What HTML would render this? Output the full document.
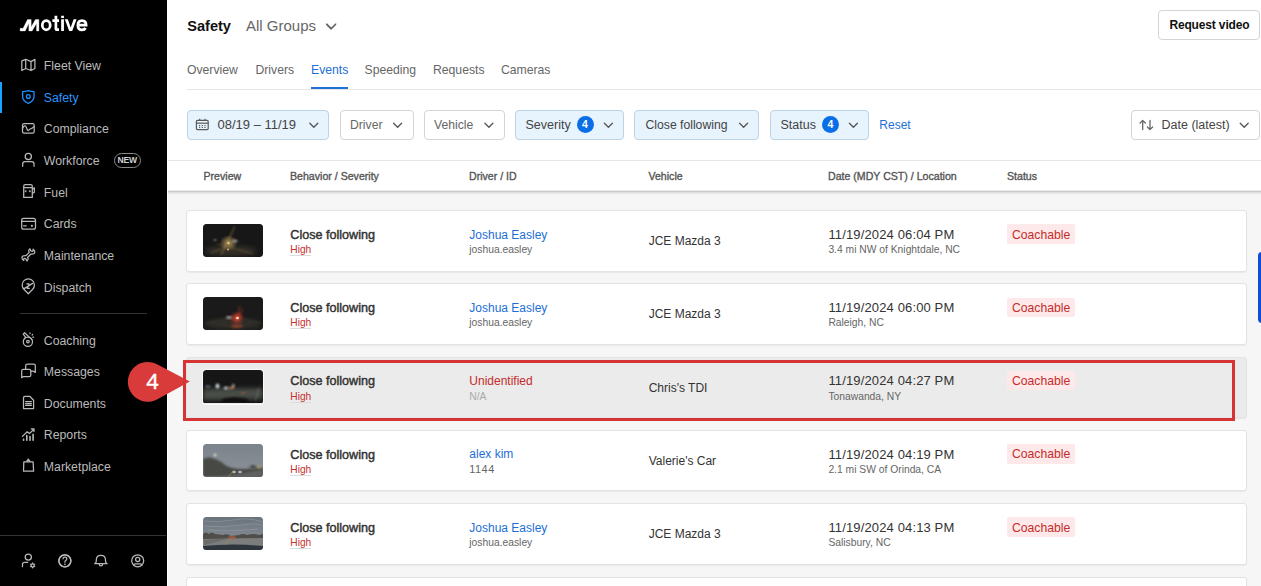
<!DOCTYPE html>
<html><head><meta charset="utf-8">
<style>
*{box-sizing:border-box;margin:0;padding:0}
html,body{width:1261px;height:586px;overflow:hidden}
body{position:relative;background:#f6f6f6;font-family:"Liberation Sans",sans-serif;color:#333}
.a{position:absolute;white-space:nowrap;line-height:1}
#side{position:absolute;left:0;top:0;width:166.6px;height:586px;background:#000}
.nav{position:absolute;left:43.8px;font-size:12.3px;color:#bababa;line-height:1;white-space:nowrap}
.ico{position:absolute;left:21px;width:16px;height:16px;overflow:visible}
.ico *{fill:none;stroke:#c8c8c8;stroke-width:1.3;stroke-linecap:round;stroke-linejoin:round}
.divl{position:absolute;left:20px;width:127px;height:1px;background:#333}
#top{position:absolute;left:166.6px;top:0;width:1094.4px;height:190px;background:#fff}
.btn{position:absolute;top:110px;height:30px;border:1px solid #d4d4d4;border-radius:4px;background:#fff}
.btn.sel{background:#e7f3fd;border-color:#bcd3e6}
.ft{position:absolute;font-size:13px;color:#444;line-height:1;white-space:nowrap}
.chev{position:absolute;width:10px;height:6px;overflow:visible}
.chev path{fill:none;stroke:#555;stroke-width:1.3;stroke-linecap:round;stroke-linejoin:round}
.badge{position:absolute;top:116px;width:17px;height:17px;border-radius:50%;background:#0a6ee6;color:#fff;font-size:10.5px;font-weight:bold;text-align:center;line-height:17px}
.th{position:absolute;top:170.9px;font-size:10.6px;font-weight:normal;-webkit-text-stroke:0.35px #555;color:#555;line-height:1;white-space:nowrap}
.card{position:absolute;left:186px;width:1061px;height:61.5px;background:#fff;border-radius:3.5px;box-shadow:inset 0 0 0 1px #e3e3e3,0 1px 1px rgba(0,0,0,.06)}
.thumb{position:absolute;left:17.2px;top:13.9px;width:60px;height:33.3px;border-radius:3.5px;overflow:hidden}.thumb svg{display:block}
.beh{position:absolute;left:104.3px;top:18.9px;font-size:12.6px;font-weight:normal;-webkit-text-stroke:0.45px #333;color:#333;line-height:1;white-space:nowrap}
.sev{position:absolute;left:104.3px;top:35.1px;font-size:10.2px;color:#c8302f;line-height:1;white-space:nowrap}
.sev:after{content:"";position:absolute;left:0;right:0;top:9.9px;border-top:1px solid #dcdcdc}
.drv{position:absolute;left:283.3px;top:18.6px;font-size:12px;color:#1d6fd6;line-height:1;white-space:nowrap}
.did{position:absolute;left:283.3px;top:35px;font-size:10.3px;color:#666;line-height:1;white-space:nowrap}
.veh{position:absolute;left:462.7px;top:25.2px;font-size:12px;color:#333;line-height:1;white-space:nowrap}
.dt{position:absolute;left:642.4px;top:17.8px;font-size:13px;letter-spacing:0.14px;color:#333;line-height:1;white-space:nowrap}
.loc{position:absolute;left:642.4px;top:35px;font-size:10.3px;color:#666;line-height:1;white-space:nowrap}
.st{position:absolute;left:821px;top:14.3px;width:68.3px;height:19.6px;background:#fde9e9;border-radius:2px}
.st span{position:absolute;left:5px;top:4.3px;font-size:12.2px;color:#c62b2b;line-height:1;white-space:nowrap}
</style></head>
<body>
<div id="side">
  <svg class="a" style="left:0;top:0" width="167" height="586" viewBox="0 0 167 586">
   <g fill="#fff" stroke="#fff" stroke-width="0.3" stroke-linejoin="round">
    <path d="M20.1 28.3 H23.1 L27.5 19.5 H31.2 V26.9 L35.4 19.5 H38.9 V31 H36.5 V23.4 L32.1 31 H28.8 V23.6 L25.2 31 H20.1 Z"/>
   </g>
   <g fill="none" stroke="#fff" stroke-width="2.75">
    <ellipse cx="46.25" cy="25.15" rx="3.95" ry="4.6"/>
    <path d="M55.9 15.7 V28.4 Q55.9 29.7 57.2 29.7 H59 M52.4 20.55 H59"/>
    <path d="M62.55 19.2 V31.1 M62.55 15.7 V18"/>
    <path d="M64.8 19.2 H67.8 L70.7 27.4 L73.6 19.2 H76.6 L72.2 31.1 H69.2 Z" fill="#fff" stroke="none"/>
    <path d="M78 25.15 H86.1 Q86.1 20.5 82 20.5 Q77.9 20.5 77.9 25.15 Q77.9 29.8 82 29.8 Q84.6 29.8 85.6 28"/>
   </g>
   <g fill="none" stroke="#b8b8b8" stroke-width="1.25" stroke-linecap="round" stroke-linejoin="round">
    <path d="M21.8 60.8 L25.7 59.3 L31 61.6 L34.9 59.4 V68.5 L31 70.5 L25.7 68.5 L21.8 70.5 Z M25.7 59.3 V68.5 M31 61.6 V70.5"/>
    <rect x="22.5" y="123.6" width="11.7" height="9.4" rx="1.6"/>
    <path d="M22.6 128.4 Q24.4 124.9 25.6 126.1 Q26.4 127 27.2 129.6 Q28 131.4 29.3 129.7 Q30 128.8 31.2 128.6 Q32.4 128.3 33.7 126.6"/>
    <circle cx="28.3" cy="156.5" r="3.1"/>
    <path d="M22.7 166.3 V163.8 Q22.7 161.6 24.9 161.6 H31.8 Q34 161.6 34 163.8 V166.3"/>
    <path d="M23.7 197.4 V186.2 Q23.7 184.7 25.2 184.7 H30.8 Q32.3 184.7 32.3 186.2 V197.4 Z M23.7 187.6 H32.3 M32.3 189.4 L34.4 187.8 V192.2 L32.3 193.6"/>
    <circle cx="25.6" cy="191.2" r="0.35" fill="#b8b8b8"/><circle cx="29.8" cy="191.2" r="0.35" fill="#b8b8b8"/>
    <rect x="21.7" y="218.4" width="13.8" height="10.8" rx="2"/>
    <path d="M21.7 221.3 H35.5 M23.6 225.8 H26.2"/>
    <circle cx="31.9" cy="225.8" r="1.1" fill="#b8b8b8" stroke="none"/>
    <path transform="translate(28.4 254.9) rotate(-45)" d="M-2.4 -1.2 H2.4 C2.6 -2.8 4 -3.4 5.4 -3.2 L4.6 -1.3 Q4.8 0.1 5.8 0.6 L7.3 -0.7 Q7.7 1.5 6.4 2.7 Q4.6 3.8 2.4 1.2 H-2.4 C-2.6 2.8 -4 3.4 -5.4 3.2 L-4.6 1.3 Q-4.8 -0.1 -5.8 -0.6 L-7.3 0.7 Q-7.7 -1.5 -6.4 -2.7 Q-4.6 -3.8 -2.4 -1.2 Z"/>
    <path d="M28.3 293.8 L23.9 289.2 A6.1 6.1 0 1 1 32.7 289.2 Z M24.2 288.6 L32.6 283.4 M26.9 283.9 H29 L27.2 288.4 H29.3"/>
    <circle cx="27.9" cy="341.8" r="4.6"/><circle cx="27.9" cy="341.6" r="1.3"/>
    <path d="M24 335.2 L23.3 334.2 L24.6 332.7 L32 339.6 M24 335.2 L25.6 337.2 L24.4 339" />
    <path d="M30 332.9 V333.6 M32.6 334.4 L32.1 335.1 M33.6 337.2 H32.8"/>
    <path d="M25.7 369.4 V365.6 Q25.7 364 27.3 364 H33.7 Q35.3 364 35.3 365.6 V372.4 L33.3 371.2 H30.8"/>
    <path d="M21.7 377.7 V371 Q21.7 369.4 23.3 369.4 H29.2 Q30.8 369.4 30.8 371 V374.9 Q30.8 376.5 29.2 376.5 H23.5 Z"/>
    <path d="M23.5 408.5 V397.8 Q23.5 396.3 25 396.3 H29.7 L33.6 400.3 V408.5 Z M25.6 401.6 H31.4 M25.6 403.5 H31.4 M25.6 405.3 H31.4"/>
    <path d="M23.6 439.4 V440.3 M26.8 435.6 V440.3 M30 436.6 V440.3 M33.1 434.4 V440.3" stroke-width="1.6"/>
    <path d="M22.4 436.4 L27.2 431.8 L29.5 433.6 L33.8 429.2 M31.2 428.9 H34 V431.4"/>
    <path d="M23.5 471.2 L23.8 461.9 H33.1 L33.6 471.2 Z M26.4 461.9 L28.3 459.1 L30.3 461.9"/>
    <circle cx="28.3" cy="557.1" r="3.1"/>
    <path d="M22.5 566.7 V564.4 Q22.5 562.3 24.6 562.3 H27.8"/>
    <path d="M64.9 554.8 A6 6 0 1 1 64.8 554.8 Z" />
    <circle cx="64.9" cy="560.8" r="6"/>
    <path d="M63 558.8 Q63 557 64.9 557 Q66.8 557 66.8 558.8 Q66.8 560 65.5 560.7 Q64.9 561.1 64.9 562.2"/>
    <circle cx="64.9" cy="564.3" r="0.3" fill="#b8b8b8"/>
    <path d="M94.7 563.7 Q96.2 562.9 96.3 561 V560 Q96.3 555.3 100.9 555.3 Q105.5 555.3 105.5 560 V561 Q105.6 562.9 107.1 563.7 Z M99.2 563.9 Q99.2 565.8 100.9 565.8 Q102.6 565.8 102.6 563.9"/>
    <circle cx="137.7" cy="560.8" r="6"/>
    <circle cx="137.7" cy="559.4" r="2.1"/>
    <path d="M133.6 565.2 Q133.6 563.8 135 563.8 H140.4 Q141.8 563.8 141.8 565.2"/>
   </g>
   <g fill="none" stroke="#1e8fff" stroke-width="1.3" stroke-linejoin="round">
    <path d="M28.3 90.6 Q25.6 91.6 22.6 91.6 V96.8 Q22.6 101 28.3 103.3 Q34 101 34 96.8 V91.6 Q31 91.6 28.3 90.6 Z"/>
    <circle cx="28.3" cy="96.5" r="1.9"/>
   </g>
   <path d="M32.60 562.10 L33.60 563.67 L35.46 563.75 L34.60 565.40 L35.46 567.05 L33.60 567.13 L32.60 568.70 L31.60 567.13 L29.74 567.05 L30.60 565.40 L29.74 563.75 L31.60 563.67 Z" fill="#b8b8b8"/>
   <circle cx="32.6" cy="565.4" r="0.9" fill="#000"/>
  </svg>
  <div class="a" style="left:0;top:82px;width:1.6px;height:31px;background:#1aa2ff"></div>

  <div class="nav" style="top:59.8px">Fleet View</div>
  <div class="nav" style="top:91.5px;color:#2a95ff">Safety</div>
  <div class="nav" style="top:123.2px">Compliance</div>
  <div class="nav" style="top:154.9px">Workforce</div>
  <div class="a" style="left:113.5px;top:153.4px;width:27.3px;height:14.2px;border:1px solid #8a8a8a;border-radius:8px;color:#d0d0d0;font-size:8.6px;font-weight:bold;line-height:12.4px;text-align:center;letter-spacing:-0.2px">NEW</div>
  <div class="nav" style="top:186.6px">Fuel</div>
  <div class="nav" style="top:218.3px">Cards</div>
  <div class="nav" style="top:250.0px">Maintenance</div>
  <div class="nav" style="top:281.5px">Dispatch</div>
  <div class="divl" style="top:313px"></div>
  <div class="nav" style="top:334.5px">Coaching</div>
  <div class="nav" style="top:366.2px">Messages</div>
  <div class="nav" style="top:397.7px">Documents</div>
  <div class="nav" style="top:429.2px">Reports</div>
  <div class="nav" style="top:460.8px">Marketplace</div>
  <div class="a" style="left:0;top:535px;width:166px;height:1px;background:#333"></div>
</div>

<div id="top">
</div>
<div class="a" style="left:166.6px;top:190px;width:1.4px;height:396px;background:#fff"></div>
<!-- header -->
<div class="a" style="left:187.2px;top:18.5px;font-size:14.6px;font-weight:bold;color:#111">Safety</div>
<div class="a" style="left:246px;top:18.2px;font-size:15px;color:#666">All Groups</div>
<svg class="chev" style="left:326px;top:23.5px" viewBox="0 0 10 6"><path d="M0.6 0.6 L5 5 L9.4 0.6" style="stroke:#666"/></svg>

<div class="a" style="left:1158px;top:10px;width:102px;height:30px;border:1px solid #d4d4d4;border-radius:4px;background:#fff"></div>
<div class="a" style="left:1169.4px;top:19.1px;font-size:12px;letter-spacing:-0.15px;font-weight:bold;color:#111">Request video</div>

<!-- tabs -->
<div class="a" style="left:187px;top:89px;width:1074px;height:1px;background:#e6e6e6"></div>
<div class="a" style="left:187px;top:64.1px;font-size:12.2px;color:#666">Overview</div>
<div class="a" style="left:255.5px;top:64.1px;font-size:12.2px;color:#666">Drivers</div>
<div class="a" style="left:311px;top:64.1px;font-size:12.2px;color:#1d6fd6">Events</div>
<div class="a" style="left:364.5px;top:64.1px;font-size:12.2px;color:#666">Speeding</div>
<div class="a" style="left:433px;top:64.1px;font-size:12.2px;color:#666">Requests</div>
<div class="a" style="left:501px;top:64.1px;font-size:12.2px;color:#666">Cameras</div>
<div class="a" style="left:311px;top:87px;width:37px;height:2px;background:#1d6fd6"></div>

<!-- filters -->
<div class="btn sel" style="left:187px;width:142px"></div>
<div class="ft" style="left:217.5px;top:118.3px">08/19 – 11/19</div>
<div class="btn" style="left:339.5px;width:74px"></div>
<div class="ft" style="left:350px;top:118.8px;color:#666;font-size:12.2px">Driver</div>
<div class="btn" style="left:423.5px;width:81px"></div>
<div class="ft" style="left:434px;top:118.8px;color:#666;font-size:12.2px">Vehicle</div>
<div class="btn sel" style="left:514.5px;width:109.5px"></div>
<div class="ft" style="left:525.5px;top:118.8px;font-size:12.5px">Severity</div>
<div class="badge" style="left:576.5px">4</div>
<div class="btn sel" style="left:634px;width:125px"></div>
<div class="ft" style="left:645.5px;top:118.8px;font-size:12.2px">Close following</div>
<div class="btn sel" style="left:769.5px;width:99.5px"></div>
<div class="ft" style="left:780.5px;top:118.8px;font-size:12.5px">Status</div>
<div class="badge" style="left:822px">4</div>
<div class="ft" style="left:879.3px;top:118.8px;color:#1d6fd6;font-size:12px">Reset</div>
<div class="btn" style="left:1130.5px;width:129px"></div>
<div class="ft" style="left:1161.5px;top:118.8px;font-size:12.5px">Date (latest)</div>
<svg class="a" style="left:0;top:0" width="1261" height="160" viewBox="0 0 1261 160">
 <g fill="none" stroke="#555" stroke-width="1.3" stroke-linecap="round" stroke-linejoin="round">
  <path d="M309.8 123.2 L313.8 127.2 L317.8 123.2"/>
  <path d="M393.6 123.2 L397.6 127.2 L401.6 123.2"/>
  <path d="M484.9 123.2 L488.9 127.2 L492.9 123.2"/>
  <path d="M604.4 123.2 L608.4 127.2 L612.4 123.2"/>
  <path d="M739.6 123.2 L743.6 127.2 L747.6 123.2"/>
  <path d="M849.4 123.2 L853.4 127.2 L857.4 123.2"/>
  <path d="M1240.2 123.2 L1244.2 127.2 L1248.2 123.2"/>
  <path d="M326.8 24 L331.3 28.5 L335.8 24" stroke="#666" stroke-width="1.2"/>
  <path d="M1142.7 129.6 V120.4 M1140.1 123 L1142.7 120.4 L1145.3 123 M1150 120.4 V129.6 M1147.4 127 L1150 129.6 L1152.6 127" stroke="#666"/>
 </g>
 <g fill="none" stroke="#5a5a5a" stroke-width="1.2">
  <rect x="196.4" y="120.4" width="11.8" height="9.2" rx="1"/>
  <path d="M196.4 123.2 H208.2" />
  <path d="M199.7 118.8 V120.4 M205 118.8 V120.4"/>
 </g>
 <g fill="#5a5a5a">
  <rect x="199" y="125" width="1.2" height="1.1"/><rect x="201.7" y="125" width="1.2" height="1.1"/><rect x="204.4" y="125" width="1.2" height="1.1"/>
  <rect x="199" y="126.9" width="1.2" height="1.1"/><rect x="201.7" y="126.9" width="1.2" height="1.1"/><rect x="204.4" y="126.9" width="1.2" height="1.1"/>
 </g>
</svg>

<!-- table header -->
<div class="a" style="left:168px;top:160px;width:1093px;height:1px;background:#e6e6e6"></div>
<div class="a" style="left:168px;top:190px;width:1093px;height:5px;background:linear-gradient(#ececec 0,#ececec 1px,#c9c9c9 1px,#c9c9c9 2px,#dedede 2px,#dedede 3px,#ebebeb 3px,#ebebeb 4px,#f2f2f2 4px)"></div>
<div class="th" style="left:203.5px">Preview</div>
<div class="th" style="left:290px">Behavior / Severity</div>
<div class="th" style="left:469px">Driver / ID</div>
<div class="th" style="left:648.5px">Vehicle</div>
<div class="th" style="left:828px">Date (MDY CST) / Location</div>
<div class="th" style="left:1007px">Status</div>

<!-- rows -->
<div class="card" style="top:210px">
  <div class="thumb" style=""><svg width="60" height="33" viewBox="0 0 60 33"><defs><filter id="b1" x="-50%" y="-50%" width="200%" height="200%"><feGaussianBlur stdDeviation="0.8"/></filter><filter id="b2" x="-50%" y="-50%" width="200%" height="200%"><feGaussianBlur stdDeviation="2.5"/></filter><radialGradient id="g1"><stop offset="0" stop-color="#d8b46a" stop-opacity=".8"/><stop offset="1" stop-color="#d8b46a" stop-opacity="0"/></radialGradient></defs>
<rect width="60" height="33" fill="#171717"/>
<ellipse cx="28" cy="27" rx="26" ry="5" fill="#4a4236" opacity=".6" filter="url(#b2)"/>
<ellipse cx="25.5" cy="19" rx="9" ry="8" fill="url(#g1)"/>
<path d="M18.3 30.5 L31.9 2.5" stroke="#b8964f" stroke-width="1" opacity=".7" filter="url(#b1)"/>
<path d="M8 29 L30 20 M14 19.7 L50 29.8" stroke="#8a7448" stroke-width=".9" opacity=".6" filter="url(#b1)"/>
<circle cx="25.5" cy="19" r="1" fill="#f0d890"/><circle cx="25" cy="25.5" r=".9" fill="#d8c070"/>
<ellipse cx="32" cy="17" rx="3" ry="1.2" fill="#c8c8d0" opacity=".7" filter="url(#b1)"/>
<ellipse cx="12" cy="16" rx="1.5" ry="1" fill="#c8c8d0" opacity=".6" filter="url(#b1)"/>
</svg></div>
  <div class="beh">Close following</div><div class="sev">High</div>
  <div class="drv">Joshua Easley</div><div class="did">joshua.easley</div>
  <div class="veh">JCE Mazda 3</div>
  <div class="dt">11/19/2024 06:04 PM</div><div class="loc">3.4 mi NW of Knightdale, NC</div>
  <div class="st"><span>Coachable</span></div>
</div>
<div class="card" style="top:283.3px">
  <div class="thumb" style=""><svg width="60" height="33" viewBox="0 0 60 33"><defs><filter id="c1" x="-50%" y="-50%" width="200%" height="200%"><feGaussianBlur stdDeviation="0.8"/></filter><filter id="c2" x="-50%" y="-50%" width="200%" height="200%"><feGaussianBlur stdDeviation="2.5"/></filter><radialGradient id="h1"><stop offset="0" stop-color="#ff6040" stop-opacity=".9"/><stop offset="1" stop-color="#e03020" stop-opacity="0"/></radialGradient></defs>
<rect width="60" height="33" fill="#1a1a1a"/>
<ellipse cx="30" cy="27" rx="28" ry="5" fill="#3e3a30" opacity=".7" filter="url(#c2)"/>
<ellipse cx="34" cy="21" rx="8" ry="7" fill="url(#h1)"/>
<path d="M34 21 L37 9 M35 21 L40 12" stroke="#d04030" stroke-width="1" opacity=".7" filter="url(#c1)"/>
<ellipse cx="26" cy="20.5" rx="3" ry="1.2" fill="#d8d8e0" opacity=".8" filter="url(#c1)"/>
<circle cx="34.5" cy="21" r="1.3" fill="#ffe0d0"/>
<ellipse cx="34" cy="29" rx="6" ry="2" fill="#d05030" opacity=".5" filter="url(#c1)"/>
<path d="M2 26 L26 22 M58 26 L40 22" stroke="#5a5240" stroke-width=".8" opacity=".6" filter="url(#c1)"/>
</svg></div>
  <div class="beh">Close following</div><div class="sev">High</div>
  <div class="drv">Joshua Easley</div><div class="did">joshua.easley</div>
  <div class="veh">JCE Mazda 3</div>
  <div class="dt">11/19/2024 06:00 PM</div><div class="loc">Raleigh, NC</div>
  <div class="st"><span>Coachable</span></div>
</div>
<div class="card" style="top:356.6px;background:#ebebeb">
  <div class="thumb" style="box-shadow:0 0 0 1px #fafafa;"><svg width="60" height="33" viewBox="0 0 60 33"><defs><filter id="d1" x="-50%" y="-50%" width="200%" height="200%"><feGaussianBlur stdDeviation="0.9"/></filter><filter id="d2" x="-50%" y="-50%" width="200%" height="200%"><feGaussianBlur stdDeviation="2"/></filter></defs>
<rect width="60" height="33" fill="#151615"/>
<path d="M0 19 L60 18 L60 29 L0 30 Z" fill="#4a4d47" filter="url(#d2)"/>
<path d="M20 29 Q30 26 44 29 L46 33 L18 33 Z" fill="#0f0f0f" filter="url(#d1)"/>
<ellipse cx="14.5" cy="16" rx="2" ry="2.5" fill="#dde4f0" opacity=".9" filter="url(#d1)"/>
<ellipse cx="5" cy="16.5" rx="3" ry="1" fill="#8890c0" opacity=".7" filter="url(#d1)"/>
<ellipse cx="23" cy="18" rx="2.5" ry="1.5" fill="#d8dcf0" opacity=".8" filter="url(#d1)"/>
<ellipse cx="28" cy="18" rx="2.5" ry="1.3" fill="#e08060" opacity=".8" filter="url(#d1)"/>
<rect x="29" y="14" width="2.5" height="4" fill="#d8c8c8" opacity=".7" filter="url(#d1)"/>
<ellipse cx="40" cy="23" rx="1.5" ry="1" fill="#e06040" opacity=".7" filter="url(#d1)"/>
<path d="M56 18 L52 31" stroke="#6a6e66" stroke-width="1.2" opacity=".7" filter="url(#d1)"/>
</svg></div>
  <div class="beh">Close following</div><div class="sev">High</div>
  <div class="drv" style="color:#c42a2a">Unidentified</div><div class="did" style="color:#aaa">N/A</div>
  <div class="veh">Chris's TDI</div>
  <div class="dt">11/19/2024 04:27 PM</div><div class="loc">Tonawanda, NY</div>
  <div class="st"><span>Coachable</span></div>
</div>
<div class="card" style="top:429.9px">
  <div class="thumb" style=""><svg width="60" height="33" viewBox="0 0 60 33"><defs><filter id="e1" x="-50%" y="-50%" width="200%" height="200%"><feGaussianBlur stdDeviation="0.9"/></filter><linearGradient id="sk4" x1="0" y1="0" x2="0" y2="1"><stop offset="0" stop-color="#7c828b"/><stop offset="1" stop-color="#8b939a"/></linearGradient></defs>
<rect width="60" height="33" fill="url(#sk4)"/>
<path d="M0 15 Q6 12 12 15 Q18 17 22 21 Q28 25 40 25 L60 24 L60 33 L0 33 Z" fill="#474a45" filter="url(#e1)"/>
<path d="M46 24 Q50 18 54 24 Z" fill="#3a3d3a" filter="url(#e1)"/>
<path d="M14 33 L60 26 L60 33 Z" fill="#5e6062" filter="url(#e1)"/>
<circle cx="12" cy="11" r="1.3" fill="#f0f0d0" filter="url(#e1)"/>
<ellipse cx="31" cy="28" rx="2" ry="1.2" fill="#c8ccd0" opacity=".8"/><ellipse cx="37" cy="28" rx="2" ry="1.2" fill="#c8ccd0" opacity=".8"/>
<rect x="55" y="22" width="2" height="2.5" fill="#c0a020" filter="url(#e1)"/>
<path d="M25 33 L31 26" stroke="#b09040" stroke-width=".6"/>
</svg></div>
  <div class="beh">Close following</div><div class="sev">High</div>
  <div class="drv">alex kim</div><div class="did" style="font-size:10.9px;top:34.6px;letter-spacing:0.5px">1144</div>
  <div class="veh">Valerie's Car</div>
  <div class="dt">11/19/2024 04:19 PM</div><div class="loc">2.1 mi SW of Orinda, CA</div>
  <div class="st"><span>Coachable</span></div>
</div>
<div class="card" style="top:503.2px">
  <div class="thumb" style=""><svg width="60" height="33" viewBox="0 0 60 33"><defs><filter id="f1" x="-50%" y="-50%" width="200%" height="200%"><feGaussianBlur stdDeviation="0.7"/></filter><linearGradient id="sk5" x1="0" y1="0" x2="0" y2="1"><stop offset="0" stop-color="#6a727c"/><stop offset="1" stop-color="#8f969d"/></linearGradient></defs>
<rect width="60" height="33" fill="url(#sk5)"/>
<path d="M0 4 Q15 6 30 3 T60 5 M0 9 Q20 11 40 8 T60 10 M5 13 Q25 15 55 12" stroke="#9aa0a8" stroke-width="1" fill="none" opacity=".5" filter="url(#f1)"/>
<path d="M0 17 Q3 14 6 17 Q9 14 12 17 L20 18 Q24 16 28 19 L36 18 Q40 16 44 18 Q50 16 56 18 L60 17 L60 23 L0 23 Z" fill="#4f4d47" filter="url(#f1)"/>
<path d="M0 22 L60 21 L60 29 L0 29 Z" fill="#7c7e7e"/>
<path d="M0 23 L26 21.5 L2 28 Z" fill="#6a6c6a" filter="url(#f1)"/>
<ellipse cx="29" cy="20.5" rx="4" ry="1.6" fill="#b86040" opacity=".7" filter="url(#f1)"/>
<path d="M0 33 L0 29 Q30 26 60 29 L60 33 Z" fill="#2e343c" filter="url(#f1)"/>
<path d="M22 28 L27 22" stroke="#b09040" stroke-width=".6" opacity=".8"/>
</svg></div>
  <div class="beh">Close following</div><div class="sev">High</div>
  <div class="drv">Joshua Easley</div><div class="did">joshua.easley</div>
  <div class="veh">JCE Mazda 3</div>
  <div class="dt">11/19/2024 04:13 PM</div><div class="loc">Salisbury, NC</div>
  <div class="st"><span>Coachable</span></div>
</div>
<div class="card" style="top:576.5px"></div>

<!-- annotation -->
<svg class="a" style="left:120px;top:350px" width="80" height="60" viewBox="120 350 80 60">
 <path d="M157 364.3 L189.8 381.6 L157 399.4 A19.85 19.85 0 1 1 157 364.3 Z" fill="#d93a3a"/>
</svg>
<div class="a" style="left:146.2px;top:370.6px;font-size:22.6px;color:#fff;-webkit-text-stroke:0.35px #fff">4</div>

<div class="a" style="left:183px;top:360px;width:1052px;height:61px;border:3px solid #d63434"></div>
<div class="a" style="left:1258px;top:252px;width:5px;height:71px;background:#0c4fd0;border-radius:4px 0 0 4px"></div>

</body></html>
